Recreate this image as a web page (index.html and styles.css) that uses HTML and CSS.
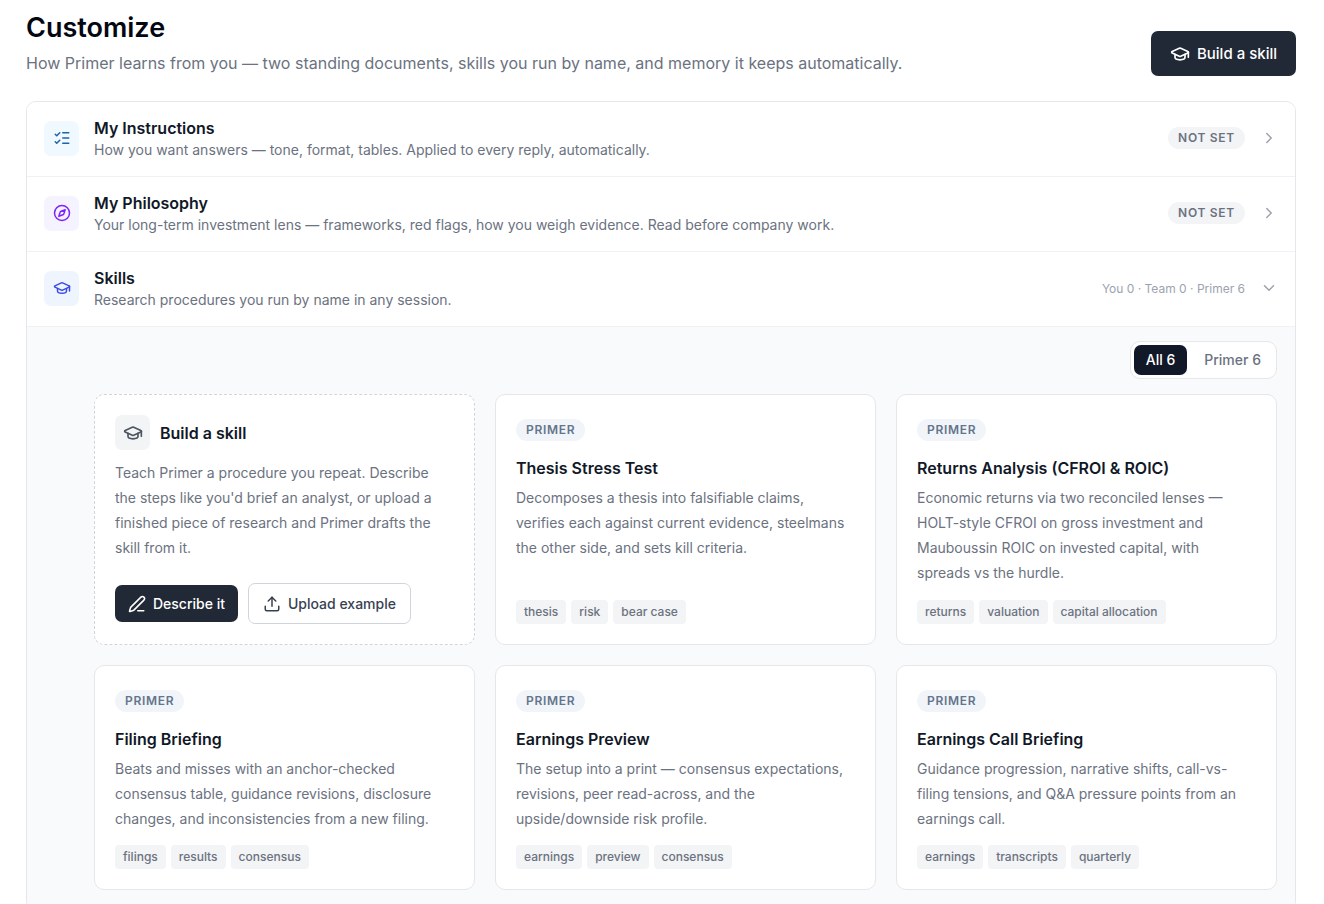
FILE: index.html
```html
<!DOCTYPE html>
<html lang="en">
<head>
  <meta charset="UTF-8" />
  <meta name="viewport" content="width=device-width, initial-scale=1" />
  <title>Customize</title>
  <link rel="stylesheet" href="styles.css">
</head>
<body>

  <!-- shared icons -->
  <svg class="sprite" aria-hidden="true">
    <symbol id="cap" viewBox="0 0 24 24">
      <path d="M21.42 10.922a1 1 0 0 0-.019-1.838L12.83 5.18a2 2 0 0 0-1.66 0L2.6 9.08a1 1 0 0 0 0 1.832l8.57 3.908a2 2 0 0 0 1.66 0z" />
      <path d="M22 10v6" />
      <path d="M6 12.5V16a6 3 0 0 0 12 0v-3.5" />
    </symbol>
    <symbol id="chevron-right" viewBox="0 0 24 24">
      <path d="m9 18 6-6-6-6" />
    </symbol>
    <symbol id="chevron-down" viewBox="0 0 24 24">
      <path d="m6 9 6 6 6-6" />
    </symbol>
  </svg>

  <main class="page">
    <header class="header">
      <div>
        <h1>Customize</h1>
        <p class="subtitle">How Primer learns from you — two standing documents, skills you run by name, and memory it keeps automatically.</p>
      </div>
      <button type="button" class="btn btn-large btn-dark">
        <svg class="icon icon-large"><use href="#cap" /></svg>
        Build a skill
      </button>
    </header>

    <div class="panel">
      <button type="button" class="row">
        <span class="tile sky">
          <svg class="icon" viewBox="0 0 24 24">
            <path d="M13 5h8" /><path d="M13 12h8" /><path d="M13 19h8" />
            <path d="m3 17 2 2 4-4" /><path d="m3 7 2 2 4-4" />
          </svg>
        </span>
        <span class="row-text">
          <span class="row-title">My Instructions</span>
          <span class="row-desc">How you want answers — tone, format, tables. Applied to every reply, automatically.</span>
        </span>
        <span class="badge gray">Not set</span>
        <svg class="icon chevron"><use href="#chevron-right" /></svg>
      </button>

      <button type="button" class="row">
        <span class="tile violet">
          <svg class="icon" viewBox="0 0 24 24">
            <circle cx="12" cy="12" r="10" />
            <path d="m16.24 7.76-1.804 5.411a2 2 0 0 1-1.265 1.265L7.76 16.24l1.804-5.411a2 2 0 0 1 1.265-1.265z" />
          </svg>
        </span>
        <span class="row-text">
          <span class="row-title">My Philosophy</span>
          <span class="row-desc">Your long-term investment lens — frameworks, red flags, how you weigh evidence. Read before company work.</span>
        </span>
        <span class="badge gray">Not set</span>
        <svg class="icon chevron"><use href="#chevron-right" /></svg>
      </button>

      <button type="button" class="row" aria-expanded="true">
        <span class="tile blue">
          <svg class="icon"><use href="#cap" /></svg>
        </span>
        <span class="row-text">
          <span class="row-title">Skills</span>
          <span class="row-desc">Research procedures you run by name in any session.</span>
        </span>
        <span class="counts">You 0 · Team 0 · Primer 6</span>
        <svg class="icon chevron"><use href="#chevron-down" /></svg>
      </button>

      <section class="skills">
        <div class="filter">
          <button type="button" class="active" aria-pressed="true">All 6</button>
          <button type="button" aria-pressed="false">Primer 6</button>
        </div>

        <div class="grid">
          <article class="card build">
            <div class="build-head">
              <span class="tile gray"><svg class="icon icon-large"><use href="#cap" /></svg></span>
              <h2>Build a skill</h2>
            </div>
            <p>Teach Primer a procedure you repeat. Describe the steps like you'd brief an analyst, or upload a finished piece of research and Primer drafts the skill from it.</p>
            <div class="actions">
              <button type="button" class="btn btn-dark">
                <svg class="icon" viewBox="0 0 24 24">
                  <path d="M13 21h8" />
                  <path d="M21.174 6.812a1 1 0 0 0-3.986-3.987L3.842 16.174a2 2 0 0 0-.5.83l-1.321 4.352a.5.5 0 0 0 .623.622l4.353-1.32a2 2 0 0 0 .83-.497z" />
                </svg>
                Describe it
              </button>
              <button type="button" class="btn btn-outline">
                <svg class="icon" viewBox="0 0 24 24">
                  <path d="M12 3v12" /><path d="m17 8-5-5-5 5" />
                  <path d="M21 15v4a2 2 0 0 1-2 2H5a2 2 0 0 1-2-2v-4" />
                </svg>
                Upload example
              </button>
            </div>
          </article>

          <article class="card">
            <div class="source"><span class="badge slate">Primer</span></div>
            <h2>Thesis Stress Test</h2>
            <p>Decomposes a thesis into falsifiable claims, verifies each against current evidence, steelmans the other side, and sets kill criteria.</p>
            <div class="tags"><span>thesis</span><span>risk</span><span>bear case</span></div>
          </article>

          <article class="card">
            <div class="source"><span class="badge slate">Primer</span></div>
            <h2>Returns Analysis (CFROI &amp; ROIC)</h2>
            <p>Economic returns via two reconciled lenses — HOLT-style CFROI on gross investment and Mauboussin ROIC on invested capital, with spreads vs the hurdle.</p>
            <div class="tags"><span>returns</span><span>valuation</span><span>capital allocation</span></div>
          </article>

          <article class="card">
            <div class="source"><span class="badge slate">Primer</span></div>
            <h2>Filing Briefing</h2>
            <p>Beats and misses with an anchor-checked consensus table, guidance revisions, disclosure changes, and inconsistencies from a new filing.</p>
            <div class="tags"><span>filings</span><span>results</span><span>consensus</span></div>
          </article>

          <article class="card">
            <div class="source"><span class="badge slate">Primer</span></div>
            <h2>Earnings Preview</h2>
            <p>The setup into a print — consensus expectations, revisions, peer read-across, and the upside/downside risk profile.</p>
            <div class="tags"><span>earnings</span><span>preview</span><span>consensus</span></div>
          </article>

          <article class="card">
            <div class="source"><span class="badge slate">Primer</span></div>
            <h2>Earnings Call Briefing</h2>
            <p>Guidance progression, narrative shifts, call-vs-filing tensions, and Q&amp;A pressure points from an earnings call.</p>
            <div class="tags"><span>earnings</span><span>transcripts</span><span>quarterly</span></div>
          </article>
        </div>
      </section>
    </div>
  </main>

</body>
</html>
```
FILE: styles.css
```css
* {
  box-sizing: border-box;
}

body {
  margin: 0;
  background: #fff;
  color: #111827;
  font-family: Inter, sans-serif;
}

button {
  font-family: inherit;
  cursor: pointer;
}

h1, h2, p {
  margin: 0;
}

.sprite {
  display: none;
}

.icon {
  width: 18px;
  height: 18px;
  flex: none;
  fill: none;
  stroke: currentColor;
  stroke-width: 2;
  stroke-linecap: round;
  stroke-linejoin: round;
}

.icon-large {
  width: 20px;
  height: 20px;
}

.page {
  padding: 10px 28px 0 26px;
}

/* header */
.header {
  display: flex;
  align-items: flex-end;
  justify-content: space-between;
  gap: 20px;
  margin-bottom: 25px;
}

h1 {
  font-size: 27px;
  line-height: 36px;
  font-weight: 600;
  color: #030712;
}

.subtitle {
  margin-top: 4px;
  font-size: 16px;
  line-height: 26px;
  color: #6b7280;
}

.btn {
  display: inline-flex;
  align-items: center;
  gap: 7px;
  padding: 8px 13px;
  border: none;
  border-radius: 7px;
  font-size: 14px;
  line-height: 21px;
  font-weight: 500;
  white-space: nowrap;
}

.btn-large {
  padding: 12px 19px;
  font-size: 15px;
}

.btn-dark {
  background: #212936;
  color: #fff;
}

.btn-outline {
  padding: 9px 14px;
  border: 1px solid #d1d5db;
  background: #fff;
  color: #374151;
}

/* list of settings */
.panel {
  border: 1px solid #e5e7eb;
  border-radius: 10px;
  overflow: hidden;
}

.row {
  display: flex;
  align-items: center;
  width: 100%;
  padding: 14px 17px 16px;
  border: none;
  border-bottom: 1px solid #f0f1f4;
  background: #fff;
  text-align: left;
}

.row-text {
  flex: 1;
  margin-left: 15px;
}

.row-title {
  display: block;
  font-size: 16px;
  line-height: 24px;
  font-weight: 600;
  color: #111827;
}

.row-desc {
  display: block;
  font-size: 14px;
  line-height: 20px;
  color: #6b7280;
}

.tile {
  display: flex;
  align-items: center;
  justify-content: center;
  flex: none;
  width: 35px;
  height: 35px;
  border-radius: 7px;
}

.sky { background: #f0f9ff; color: #2063a8; }
.violet { background: #f5f3ff; color: #7f22fe; }
.blue { background: #eff5ff; color: #3b4ce4; }
.gray { background: #f3f4f6; color: #4b5563; }

.badge {
  display: inline-block;
  padding: 0 10px;
  border-radius: 12px;
  font-size: 12px;
  line-height: 22px;
  font-weight: 600;
  letter-spacing: 0.06em;
  text-transform: uppercase;
}

.badge.gray { color: #6b7280; }
.badge.slate { background: #f1f5fa; color: #64748b; }

.counts {
  font-size: 12px;
  color: #9ca3af;
}

.chevron {
  margin-left: 15px;
  color: #9ca3af;
}

/* skills */
.skills {
  display: flex;
  flex-direction: column;
  padding: 14px 18px 20px 67px;
  background: #f9fafc;
}

.filter {
  display: flex;
  align-self: flex-end;
  gap: 5px;
  margin-bottom: 15px;
  padding: 3px;
  border: 1px solid #e5e7eb;
  border-radius: 10px;
  background: #fff;
}

.filter button {
  padding: 0 12px;
  border: none;
  border-radius: 7px;
  background: none;
  font-size: 14px;
  line-height: 30px;
  font-weight: 500;
  color: #6b7280;
}

.filter .active {
  background: #111827;
  color: #fff;
}

.grid {
  display: grid;
  grid-template-columns: repeat(3, 1fr);
  gap: 20px;
}

.card {
  display: flex;
  flex-direction: column;
  padding: 20px;
  border: 1px solid #e5e7eb;
  border-radius: 10px;
  background: #fff;
}

.card h2 {
  font-size: 16px;
  line-height: 24px;
  font-weight: 600;
}

.card p {
  margin-top: 5px;
  padding-right: 6px;
  font-size: 14px;
  line-height: 25px;
  color: #6b7280;
}

.source {
  display: flex;
  align-items: center;
  height: 30px;
  margin-bottom: 11px;
}

.tags {
  display: flex;
  flex-wrap: wrap;
  gap: 5px;
  margin-top: auto;
  padding-top: 14px;
}

.tags span {
  padding: 0 8px;
  border-radius: 4px;
  background: #f3f4f6;
  font-size: 12px;
  line-height: 24px;
  font-weight: 500;
  color: #6b7280;
}

.card.build {
  border: 1px dashed #d1d5db;
}

.build-head {
  display: flex;
  align-items: center;
  gap: 10px;
}

.build p {
  margin-top: 10px;
}

.actions {
  display: flex;
  align-items: center;
  gap: 10px;
  margin-top: auto;
  padding-top: 23px;
}
```
